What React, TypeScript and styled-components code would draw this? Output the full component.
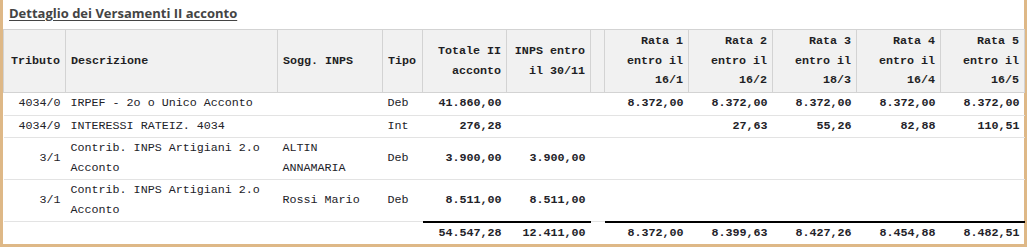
import React from "react";
import styled, { createGlobalStyle } from "styled-components";

const GlobalStyle = createGlobalStyle`
  body {
    margin: 0;
    background: #ffffff;
  }
`;

interface Row {
  tributo: string;
  descrizione: string;
  sogg: string;
  tipo: string;
  totale: string;
  inps: string;
  rate: string[];
}

const rows: Row[] = [
  {
    tributo: "4034/0",
    descrizione: "IRPEF - 2o o Unico Acconto",
    sogg: "",
    tipo: "Deb",
    totale: "41.860,00",
    inps: "",
    rate: ["8.372,00", "8.372,00", "8.372,00", "8.372,00", "8.372,00"],
  },
  {
    tributo: "4034/9",
    descrizione: "INTERESSI RATEIZ. 4034",
    sogg: "",
    tipo: "Int",
    totale: "276,28",
    inps: "",
    rate: ["", "27,63", "55,26", "82,88", "110,51"],
  },
  {
    tributo: "3/1",
    descrizione: "Contrib. INPS Artigiani 2.o Acconto",
    sogg: "ALTIN ANNAMARIA",
    tipo: "Deb",
    totale: "3.900,00",
    inps: "3.900,00",
    rate: ["", "", "", "", ""],
  },
  {
    tributo: "3/1",
    descrizione: "Contrib. INPS Artigiani 2.o Acconto",
    sogg: "Rossi Mario",
    tipo: "Deb",
    totale: "8.511,00",
    inps: "8.511,00",
    rate: ["", "", "", "", ""],
  },
];

const totals = {
  totale: "54.547,28",
  inps: "12.411,00",
  rate: ["8.372,00", "8.399,63", "8.427,26", "8.454,88", "8.482,51"],
};

const rateHeaders = ["16/1", "16/2", "18/3", "16/4", "16/5"];

const App = () => {
  return (
    <>
      <GlobalStyle />
      <Panel>
        <Title>Dettaglio dei Versamenti II acconto</Title>
        <Table>
          <colgroup>
            <col style={{ width: 62 }} />
            <col style={{ width: 212 }} />
            <col style={{ width: 105 }} />
            <col style={{ width: 40 }} />
            <col style={{ width: 84 }} />
            <col style={{ width: 84 }} />
            <col style={{ width: 14 }} />
            {rateHeaders.map((d) => (
              <col key={d} style={{ width: 84 }} />
            ))}
          </colgroup>
          <thead>
            <tr>
              <Th $align="right">Tributo</Th>
              <Th>Descrizione</Th>
              <Th>Sogg. INPS</Th>
              <Th>Tipo</Th>
              <Th $align="right">Totale II acconto</Th>
              <Th $align="right">INPS entro il 30/11</Th>
              <Th />
              {rateHeaders.map((d, i) => (
                <Th key={d} $align="right">
                  Rata {i + 1} entro il {d}
                </Th>
              ))}
            </tr>
          </thead>
          <tbody>
            {rows.map((r, idx) => (
              <tr key={idx}>
                <Td $align="right">{r.tributo}</Td>
                <Td>{r.descrizione}</Td>
                <Td>{r.sogg}</Td>
                <Td>{r.tipo}</Td>
                <Td $align="right" $bold>
                  {r.totale}
                </Td>
                <Td $align="right" $bold>
                  {r.inps}
                </Td>
                <Td />
                {r.rate.map((v, i) => (
                  <Td key={i} $align="right" $bold>
                    {v}
                  </Td>
                ))}
              </tr>
            ))}
            <TotalRow>
              <Td />
              <Td />
              <Td />
              <Td />
              <Td $align="right" $bold $sum>
                {totals.totale}
              </Td>
              <Td $align="right" $bold $sum>
                {totals.inps}
              </Td>
              <Td />
              {totals.rate.map((v, i) => (
                <Td key={i} $align="right" $bold $sum>
                  {v}
                </Td>
              ))}
            </TotalRow>
          </tbody>
        </Table>
      </Panel>
    </>
  );
};

const Panel = styled.div`
  width: 1027px;
  box-sizing: border-box;
  border: 3px solid #deb887;
  border-top: none;
  background: #ffffff;
  box-shadow: 0 1px 0 #e2e4e8;
`;

const Title = styled.h3`
  margin: 0;
  padding: 4px 0 7px 6px;
  font-family: "Open Sans", "Liberation Sans", sans-serif;
  font-size: 13px;
  line-height: 18px;
  font-weight: 700;
  color: #444444;
  text-decoration: underline;
  text-underline-offset: 2px;
`;

const Table = styled.table`
  width: 1021px;
  table-layout: fixed;
  border-collapse: collapse;
  font-family: "Liberation Mono", "DejaVu Sans Mono", monospace;
  font-size: 11.7px;
  line-height: 19.5px;
  color: #1f1f24;
`;

const Th = styled.th<{ $align?: "left" | "right" }>`
  background: #f1f1f1;
  border: 1px solid #d3d3d3;
  padding: 2px 5px 1px 5px;
  height: 59px;
  text-align: ${(p) => p.$align || "left"};
  vertical-align: middle;
  font-weight: 700;
`;

const Td = styled.td<{ $align?: "left" | "right"; $bold?: boolean; $sum?: boolean }>`
  padding: 1px 5px;
  border-bottom: 1px solid #e3e3e3;
  border-top: ${(p) => (p.$sum ? "2px solid #000000" : "none")};
  text-align: ${(p) => p.$align || "left"};
  vertical-align: middle;
  font-weight: ${(p) => (p.$bold ? 700 : 400)};
  color: #222228;
`;

const TotalRow = styled.tr`
  td {
    border-bottom: none;
    padding-top: 1px;
  }
`;

export default App;
